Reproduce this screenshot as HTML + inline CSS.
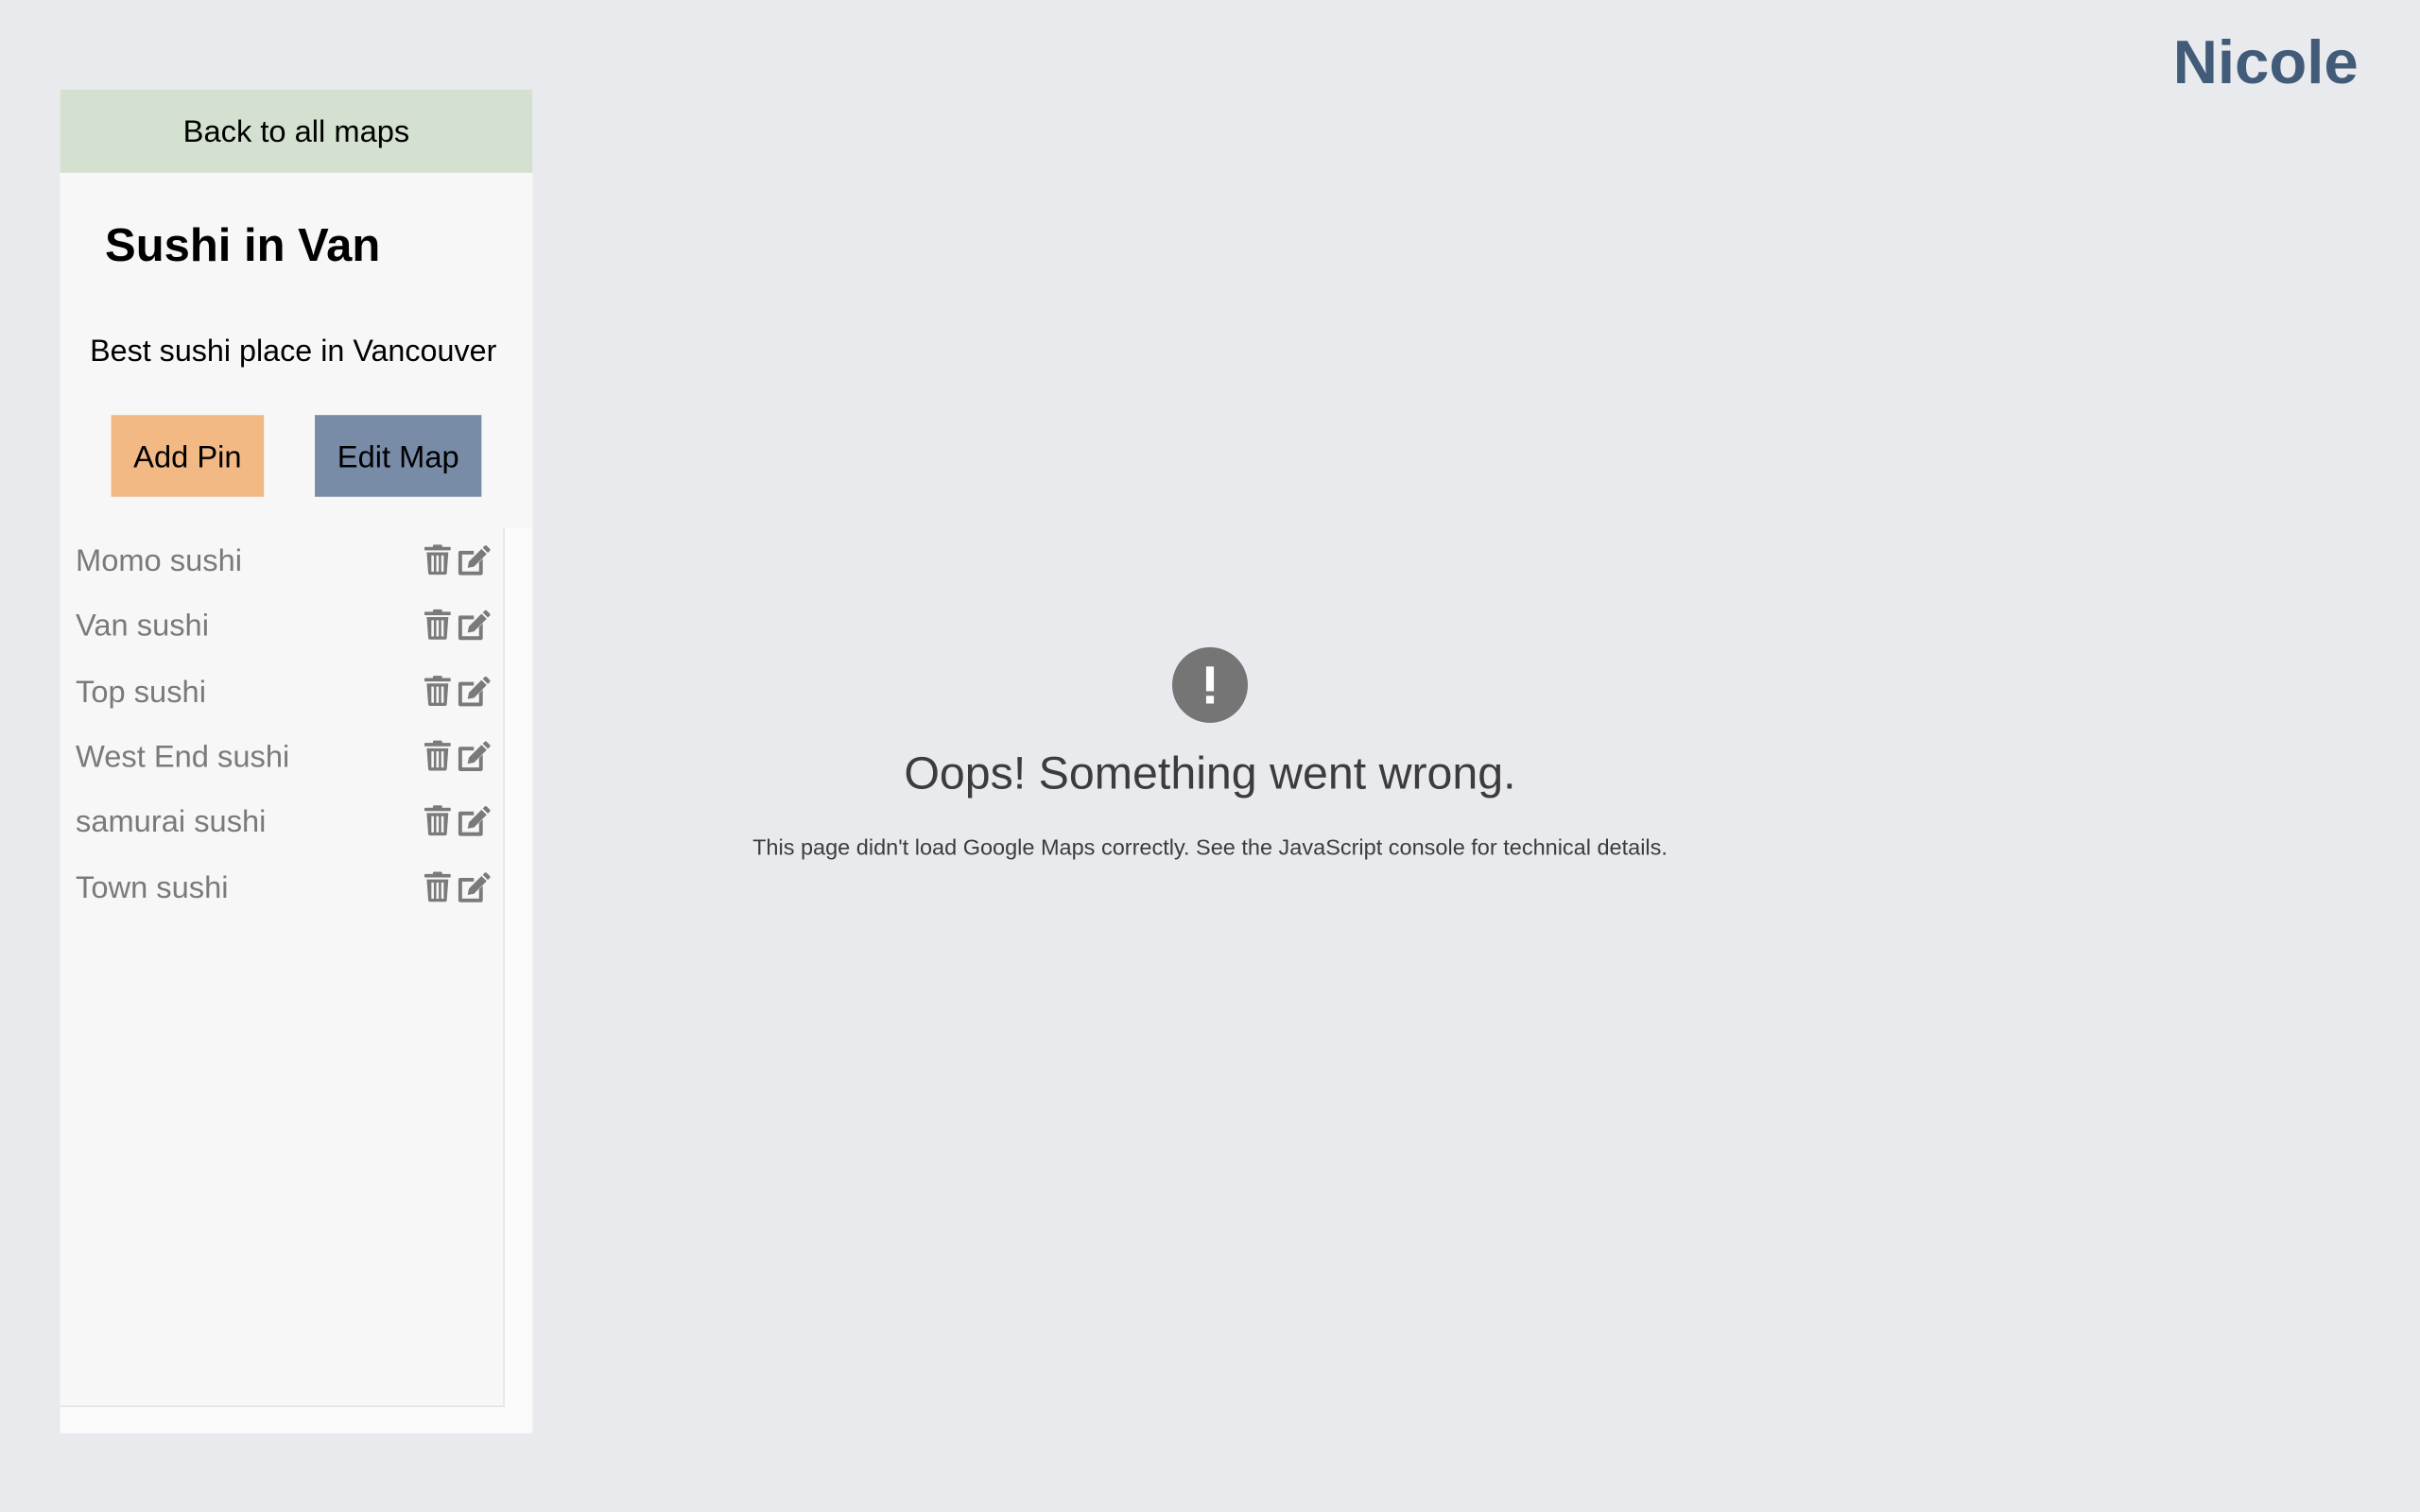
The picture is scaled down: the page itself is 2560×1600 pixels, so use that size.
<!DOCTYPE html>
<html><head><meta charset="utf-8"><style>
html,body{margin:0;padding:0;background:#e9eaee;width:2560px;height:1600px;overflow:hidden}
#w{position:absolute;left:0;top:0;width:1568px;height:980px;transform:scale(1.632653);transform-origin:0 0;font-family:"Liberation Sans",Arial,sans-serif}
.a{position:absolute}
.name{right:40px;top:19px;font-size:40px;font-weight:bold;color:#425b78}
.panel{left:39px;top:58px;width:306px;height:871px;background:#fbfbfb}
.top{left:39px;top:58px;width:306px;height:284px;background:#f7f7f7}
.green{left:39px;top:58px;width:306px;height:54px;background:#d4e0d0;text-align:center;line-height:57px;font-size:20px}
.title{left:68px;top:143px;font-size:30px;font-weight:bold}
.desc{left:39px;width:302px;top:217px;text-align:center;font-size:19.8px}
.btn{top:269px;height:53px;line-height:56px;text-align:center;font-size:20px}
.list{left:39px;top:342px;width:287px;height:569px;background:#f7f7f7;border-right:1px solid #e3e3e3;border-bottom:1px solid #e3e3e3}
.it{left:49px;font-size:20px;color:#7a7a7a}
.err{left:0;width:1568px;text-align:center;color:#3c3c3c}
</style></head><body><div id="w">
<div class="a name">Nicole</div>
<div class="a panel"></div>
<div class="a top"></div>
<div class="a green">Back to all maps</div>
<div class="a title">Sushi in Van</div>
<div class="a desc">Best sushi place in Vancouver</div>
<div class="a btn" style="left:72px;width:99px;background:#f2b985">Add Pin</div>
<div class="a btn" style="left:204px;width:108px;background:#788ba7">Edit Map</div>
<div class="a list"></div>
<div class="a it" style="top:353px">Momo sushi</div>
<div class="a it" style="top:395px">Van sushi</div>
<div class="a it" style="top:438px">Top sushi</div>
<div class="a it" style="top:480px">West End sushi</div>
<div class="a it" style="top:522px">samurai sushi</div>
<div class="a it" style="top:565px">Town sushi</div>
<svg class="a" style="left:0;top:0" width="400" height="620">
<defs><g id="ic" fill="#7a7a7a">
<rect x="1" y="1.5" width="17" height="2.2" rx="0.5"/><rect x="6.5" y="0" width="6" height="2.5" rx="0.8"/>
<path d="M2.5 5h14l-1 13.5a1.2 1.2 0 0 1-1.2 1H4.7a1.2 1.2 0 0 1-1.2-1z"/>
<rect x="5.5" y="7" width="1.6" height="10.5" fill="#f7f7f7"/><rect x="8.7" y="7" width="1.6" height="10.5" fill="#f7f7f7"/><rect x="11.9" y="7" width="1.6" height="10.5" fill="#f7f7f7"/>
<path d="M24 4h9v2.4h-7.6v11h11v-6l2.4-2.4v9.5a1.3 1.3 0 0 1-1.3 1.3H24.3A1.3 1.3 0 0 1 23 18.5V5.3A1.3 1.3 0 0 1 24 4z"/>
<path d="M29 15l0.8-4 8.2-8.2 3.3 3.3-8.2 8.2z"/><path d="M38.8 2l1.2-1.2a1 1 0 0 1 1.4 0l1.9 1.9a1 1 0 0 1 0 1.4l-1.2 1.2z"/>
</g></defs>
<use href="#ic" x="274" y="353"/><use href="#ic" x="274" y="395"/><use href="#ic" x="274" y="438"/>
<use href="#ic" x="274" y="480"/><use href="#ic" x="274" y="522"/><use href="#ic" x="274" y="565"/>
</svg>
<svg class="a" style="left:759px;top:419px" width="50" height="50"><circle cx="25" cy="25" r="24.5" fill="#757575"/><rect x="22.5" y="13" width="5" height="16" fill="#fff"/><rect x="22.5" y="32" width="5" height="5" fill="#fff"/></svg>
<div class="a err" style="top:485px;font-size:29.6px">Oops! Something went wrong.</div>
<div class="a err" style="top:542px;font-size:14.4px">This page didn't load Google Maps correctly. See the JavaScript console for technical details.</div>
</div></body></html>
